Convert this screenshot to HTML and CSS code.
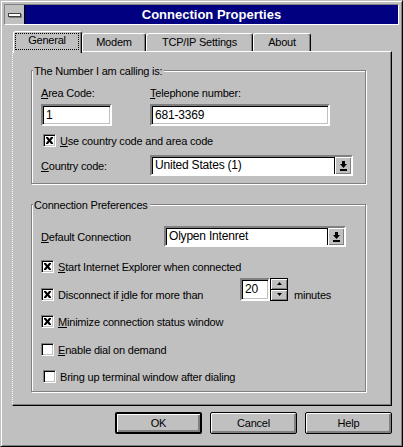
FILE: index.html
```html
<!DOCTYPE html>
<html lang="en">
  <head>
    <meta charset="UTF-8" />
    <title>Connection Properties</title>
    <link rel="stylesheet" href="styles.css">
  </head>
  <body>
    <div class="window">
      <div class="titlebar">
        <div class="sysmenu"><span class="sysbar"></span></div>
        <div class="title">Connection Properties</div>
      </div>
      <div class="client">
        <div class="tabs">
          <div class="tab active"><span class="focus">General</span></div>
          <div class="tab modem">Modem</div>
          <div class="tab tcp">TCP/IP Settings</div>
          <div class="tab about">About</div>
        </div>
        <div class="panel">
          <div class="group number">
            <div class="caption">The Number I am calling is:</div>
            <div class="phone">
              <div class="field area-field">
                <span class="label"><u>A</u>rea Code:</span>
                <div class="textbox area">1</div>
              </div>
              <div class="field">
                <span class="label"><u>T</u>elephone number:</span>
                <div class="textbox tel">681-3369</div>
              </div>
            </div>
            <div class="check use-code">
              <span class="box"><svg width="7" height="7" viewBox="0 0 7 7"><path d="M0 0h2l1.5 2 1.5-2h2v1l-2 2.5 2 2.5v1h-2l-1.5-2-1.5 2h-2v-1l2-2.5-2-2.5z" fill="#000"/></svg></span>
              <span><u>U</u>se country code and area code</span>
            </div>
            <div class="line">
              <span class="label country-label"><u>C</u>ountry code:</span>
              <div class="dropdown country">
                <span class="value">United States (1)</span>
                <span class="arrow"><svg width="9" height="10" viewBox="0 0 9 10"><path d="M3 0h3v3h2l-3.5 4-3.5-4h2z M1 8h7v2h-7z" fill="#000"/></svg></span>
              </div>
            </div>
          </div>

          <div class="group prefs">
            <div class="caption">Connection Preferences</div>
            <div class="line default-line">
              <span class="label default-label"><u>D</u>efault Connection</span>
              <div class="dropdown default-conn">
                <span class="value">Olypen Intenret</span>
                <span class="arrow"><svg width="9" height="10" viewBox="0 0 9 10"><path d="M3 0h3v3h2l-3.5 4-3.5-4h2z M1 8h7v2h-7z" fill="#000"/></svg></span>
              </div>
            </div>
            <div class="checks">
              <div class="check">
                <span class="box"><svg width="7" height="7" viewBox="0 0 7 7"><path d="M0 0h2l1.5 2 1.5-2h2v1l-2 2.5 2 2.5v1h-2l-1.5-2-1.5 2h-2v-1l2-2.5-2-2.5z" fill="#000"/></svg></span>
                <span><u>S</u>tart Internet Explorer when connected</span>
              </div>
              <div class="check">
                <span class="box"><svg width="7" height="7" viewBox="0 0 7 7"><path d="M0 0h2l1.5 2 1.5-2h2v1l-2 2.5 2 2.5v1h-2l-1.5-2-1.5 2h-2v-1l2-2.5-2-2.5z" fill="#000"/></svg></span>
                <span class="idle-label">Disconnect if <u>i</u>dle for more than</span>
                <div class="spinner">
                  <div class="textbox minutes-box">20</div>
                  <div class="spin-btns">
                    <span class="spin-btn"><svg width="5" height="3" viewBox="0 0 5 3"><path d="M2.5 0l2.5 3h-5z" fill="#000"/></svg></span>
                    <span class="spin-btn"><svg width="5" height="3" viewBox="0 0 5 3"><path d="M0 0h5l-2.5 3z" fill="#000"/></svg></span>
                  </div>
                </div>
                <span class="minutes">minutes</span>
              </div>
              <div class="check">
                <span class="box"><svg width="7" height="7" viewBox="0 0 7 7"><path d="M0 0h2l1.5 2 1.5-2h2v1l-2 2.5 2 2.5v1h-2l-1.5-2-1.5 2h-2v-1l2-2.5-2-2.5z" fill="#000"/></svg></span>
                <span><u>M</u>inimize connection status window</span>
              </div>
              <div class="check">
                <span class="box"></span>
                <span><u>E</u>nable dial on demand</span>
              </div>
              <div class="check last">
                <span class="box"></span>
                <span>Bring up terminal window after dialing</span>
              </div>
            </div>
          </div>
        </div>
        <div class="buttons">
          <div class="btn default">OK</div>
          <div class="btn">Cancel</div>
          <div class="btn">Help</div>
        </div>
      </div>
    </div>
  </body>
</html>
```

FILE: styles.css
```css
* {
  box-sizing: border-box;
}
body {
  margin: 0;
  background: #c0c0c0;
  font-family: "Liberation Sans", Arial, sans-serif;
  font-size: 11px;
  line-height: 14px;
  letter-spacing: -0.2px;
  color: #000;
}
u {
  text-underline-offset: 1px;
}
.window {
  width: 403px;
  height: 447px;
  display: flex;
  flex-direction: column;
  padding: 3px;
  background: #c0c0c0;
  border: 1px solid;
  border-color: #c0c0c0 #000 #000 #c0c0c0;
  box-shadow: inset 1px 1px #fff, inset -1px -1px #808080;
}
.titlebar {
  display: flex;
  height: 21px;
  border: 1px solid;
  border-color: #808080 #fff #fff #808080;
}
.sysmenu {
  width: 20px;
  display: flex;
  align-items: center;
  justify-content: center;
  border-right: 1px solid #000;
  background: #c0c0c0;
}
.sysbar {
  width: 13px;
  height: 4px;
  background: #fff;
  border: 1px solid #404040;
  box-shadow: 1px 1px 0 #808080;
}
.title {
  flex: 1;
  background: #000080;
  color: #fff;
  font-weight: bold;
  font-size: 13px;
  letter-spacing: 0;
  line-height: 19px;
  text-align: center;
}
.client {
  flex: 1;
  display: flex;
  flex-direction: column;
  padding: 6px 7px 0 8px;
}
.tabs {
  display: flex;
  align-items: flex-end;
  height: 20px;
  padding-left: 1px;
}
.tab {
  height: 18px;
  border: 1px solid;
  border-bottom: none;
  border-color: #fff #000 transparent #fff;
  border-radius: 3px 3px 0 0;
  box-shadow: inset -1px 0 #808080;
  text-align: center;
  line-height: 16px;
}
.tab.active {
  width: 69px;
  height: 22px;
  margin-bottom: -2px;
  position: relative;
  z-index: 1;
  background: #c0c0c0;
  padding: 1px 2px 0 1px;
}
.focus {
  display: block;
  height: 17px;
  line-height: 15px;
  outline: 1px dotted #000;
  outline-offset: -1px;
}
.modem {
  width: 64px;
}
.tcp {
  width: 107px;
}
.about {
  width: 58px;
}
.panel {
  height: 355px;
  padding: 18px 0 0 18px;
  border: 1px solid #000;
  border-top-color: #fff;
  border-left: 1px dotted #fff;
  box-shadow: inset -1px -1px #808080;
}
.group {
  width: 335px;
  padding: 0 8px 7px 9px;
  border: 1px solid #808080;
  box-shadow: inset 1px 1px #fff, 1px 1px #fff;
}
.caption {
  display: table;
  margin: -7px 0 0 -8px;
  padding: 0 2px 0 1px;
  background: #c0c0c0;
}
.phone {
  display: flex;
  margin-top: 8px;
}
.field {
  display: flex;
  flex-direction: column;
  gap: 4px;
}
.area-field {
  width: 109px;
}
.textbox {
  height: 22px;
  padding: 0 3px;
  line-height: 18px;
  font-size: 12px;
  background: #fff;
  border: 2px solid;
  border-color: #808080 #fff #fff #808080;
  box-shadow: inset 1px 1px #000, inset -1px -1px #c0c0c0;
}
.area {
  width: 71px;
}
.tel {
  width: 180px;
}
.check {
  display: flex;
  align-items: flex-start;
  height: 14px;
}
.use-code {
  margin-top: 8px;
  padding-left: 2px;
}
.box {
  width: 13px;
  height: 13px;
  margin-right: 4px;
  display: flex;
  align-items: center;
  justify-content: center;
  background: #fff;
  border: 1px solid;
  border-color: #808080 #fff #fff #808080;
  box-shadow: inset 1px 1px #000, inset -1px -1px #c0c0c0;
}
.line {
  display: flex;
  align-items: center;
  margin-top: 7px;
}
.country-label {
  width: 109px;
}
.dropdown {
  display: flex;
  height: 21px;
  background: #fff;
  border: 2px solid;
  border-color: #808080 #fff #fff #808080;
  box-shadow: inset 1px 1px #000;
}
.dropdown .value {
  flex: 1;
  padding-left: 3px;
  font-size: 12px;
  line-height: 17px;
}
.arrow {
  width: 17px;
  display: flex;
  align-items: center;
  justify-content: center;
  background: #c0c0c0;
  border-left: 1px solid #000;
  box-shadow: inset 1px 1px #fff, inset -1px -1px #808080;
}
.country {
  width: 203px;
}
.prefs {
  margin-top: 20px;
}
.default-line {
  margin-top: 14px;
}
.default-label {
  width: 123px;
}
.default-conn {
  width: 182px;
}
.checks {
  display: flex;
  flex-direction: column;
  gap: 13.5px;
  margin-top: 13px;
}
.check.last {
  padding-left: 2px;
}
.idle-label {
  width: 182px;
}
.spinner {
  display: flex;
  margin-top: -10px;
}
.minutes-box {
  width: 30px;
  height: 23px;
  line-height: 19px;
}
.spin-btns {
  width: 18px;
  height: 23px;
  display: flex;
  flex-direction: column;
  gap: 1px;
  background: #000;
  border: 1px solid #000;
}
.spin-btn {
  flex: 1;
  display: flex;
  align-items: center;
  justify-content: center;
  background: #c0c0c0;
  box-shadow: inset 1px 1px #fff, inset -1px -1px #808080;
}
.minutes {
  margin-left: 6px;
}
.buttons {
  display: flex;
  justify-content: flex-end;
  gap: 8px;
  margin-top: 6px;
}
.btn {
  width: 87px;
  height: 22px;
  text-align: center;
  line-height: 20px;
  border: 1px solid #000;
  border-radius: 2px;
  box-shadow: inset 1px 1px #fff, inset -2px -2px #808080;
}
.btn.default {
  border-width: 2px;
  line-height: 18px;
}
```
